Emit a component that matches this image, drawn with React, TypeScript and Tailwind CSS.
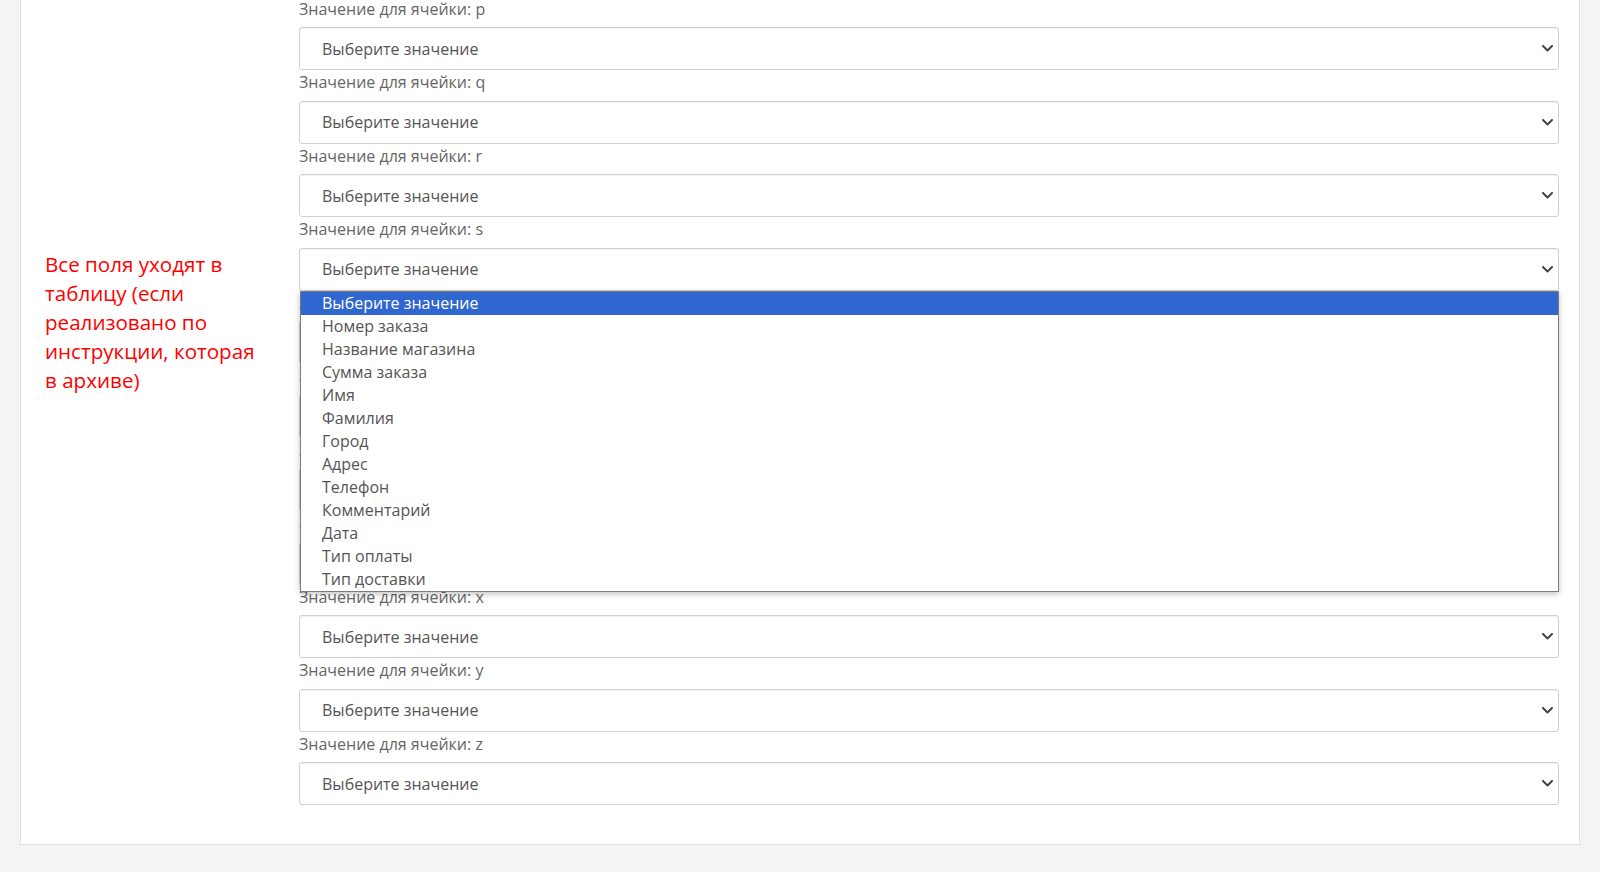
import React from 'react';

const CELLS = ['p', 'q', 'r', 's', 't', 'u', 'v', 'w', 'x', 'y', 'z'];

const OPTIONS = [
  'Выберите значение',
  'Номер заказа',
  'Название магазина',
  'Сумма заказа',
  'Имя',
  'Фамилия',
  'Город',
  'Адрес',
  'Телефон',
  'Комментарий',
  'Дата',
  'Тип оплаты',
  'Тип доставки',
];

const Chevron = () => (
  <svg width="11" height="7" viewBox="0 0 11 7" fill="none">
    <path d="M1 1l4.5 4.5L10 1" stroke="#444" strokeWidth="2" strokeLinecap="round" strokeLinejoin="round" />
  </svg>
);

const Field: React.FC<{ cell: string; open?: boolean }> = ({ cell, open }) => (
  <div className="relative flex flex-col">
    <div className="text-[16px] leading-[24px] text-[#666] mb-[6.5px]">Значение для ячейки: {cell}</div>
    <div className="h-[43px] flex items-center justify-between pl-[22px] pr-[5px] bg-white border border-[#d0d0d0] rounded-[3px] shadow-[inset_0_1px_1px_rgba(0,0,0,0.06)] text-[16px] text-[#555]">
      <span>Выберите значение</span>
      <Chevron />
    </div>
    {open && (
      // раскрытый список поверх следующих полей
      <div className="absolute left-px right-0 top-full z-10 bg-white border border-[#7c7c7c] shadow-[0_2px_6px_rgba(0,0,0,0.25)]">
        {OPTIONS.map((o, i) => (
          <div
            key={o}
            className={`h-[23px] leading-[23px] pl-[21px] text-[16px] ${i === 0 ? 'bg-[#3066d0] text-white' : 'text-[#555]'}`}
          >
            {o}
          </div>
        ))}
      </div>
    )}
  </div>
);

export default function App() {
  return (
    <div className="h-[872px] overflow-hidden bg-[#f4f4f4]" style={{ fontFamily: '"Open Sans", "Noto Sans", sans-serif' }}>
      <div className="mx-[20px] -mt-[4.5px] bg-white border border-[#e2e2e2] flex">
        <div className="w-[278px] shrink-0 pl-[24px] pt-[253.5px]">
          <p className="w-[222px] text-[20.6px] leading-[29px] text-[#ff0000]">
            Все поля уходят в таблицу (если реализовано по инструкции, которая в архиве)
          </p>
        </div>
        <div className="w-[1260px] flex flex-col pb-[38.5px]">
          {CELLS.map(c => (
            <Field key={c} cell={c} open={c === 's'} />
          ))}
        </div>
      </div>
    </div>
  );
}
